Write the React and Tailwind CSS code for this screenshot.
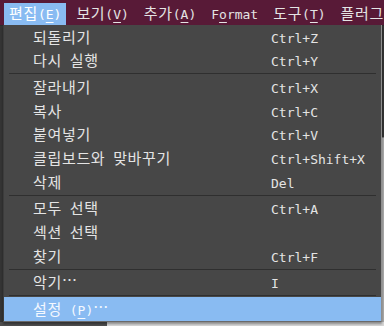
const WIDE = /[\u1100-\u11ff\u3130-\u318f\uac00-\ud7a3\u2026]/;

// Qt style label: "&" marks the mnemonic letter
function Label({ text }) {
  const runs = [];
  let under = false;
  for (const ch of text) {
    if (ch === '&') {
      under = true;
      continue;
    }
    const wide = WIDE.test(ch);
    const last = runs[runs.length - 1];
    if (!under && ch !== '…' && last && !last.u && !last.dots && last.wide === wide) last.s += ch;
    else runs.push({ s: ch, wide, u: under, dots: ch === '…' });
    under = false;
  }
  return (
    <span className="whitespace-pre">
      {runs.map((r, i) =>
        r.dots ? (
          <span
            key={i}
            className="inline-block -translate-y-[2px] font-['Noto_Sans_CJK_KR',sans-serif] text-[15px] tracking-[0.66px]"
          >
            {r.s}
          </span>
        ) : r.wide ? (
          <span key={i} className="font-['Noto_Sans_CJK_KR',sans-serif] text-[15px] tracking-[0.66px]">
            {r.s}
          </span>
        ) : (
          <span
            key={i}
            className={
              r.u
                ? "font-['DejaVu_Sans_Mono',monospace] text-[13px] underline underline-offset-[3px]"
                : "font-['DejaVu_Sans_Mono',monospace] text-[13px]"
            }
          >
            {r.s}
          </span>
        )
      )}
    </span>
  );
}

const menus = ['편집(&E)', '보기(&V)', '추가(&A)', 'F&ormat', '도구(&T)', '플러그인(&P)'];

const items = [
  ['되돌리기', 'Ctrl+Z'],
  ['다시 실행', 'Ctrl+Y'],
  null,
  ['잘라내기', 'Ctrl+X'],
  ['복사', 'Ctrl+C'],
  ['붙여넣기', 'Ctrl+V'],
  ['클립보드와 맞바꾸기', 'Ctrl+Shift+X'],
  ['삭제', 'Del'],
  null,
  ['모두 선택', 'Ctrl+A'],
  ['섹션 선택', ''],
  ['찾기', 'Ctrl+F'],
  null,
  ['악기…', 'I'],
  null,
  ['설정 (&P)…', '', true],
];

export default function App() {
  return (
    <div className="relative w-[384px] h-[326px] overflow-hidden bg-[#3a3a3a] text-[#e4e4e4]">
      <div className="h-[25px] bg-[#581a37] flex items-end pl-[4px] gap-[5px] leading-[22px]">
        {menus.map((m, i) => (
          <div
            key={m}
            className={
              i === 0
                ? 'h-[22px] px-[5px] bg-[#89bbf2] text-white shrink-0 flex items-center'
                : 'h-[22px] px-[5px] shrink-0 flex items-center'
            }
          >
            <Label text={m} />
          </div>
        ))}
      </div>
      <div className="h-px bg-[#2c2c2c]" />

      {/* app content behind the popup */}
      <div className="flex h-[300px]">
        <div className="w-[3px] bg-[#343434]" />
        <div className="flex-1" />
        <div className="w-[3px] flex flex-col">
          <div className="h-[111px] bg-[#333]" />
          <div className="flex-1 bg-[#a9a9a9] border-t border-[#777]" />
        </div>
      </div>
      <div className="absolute left-0 bottom-0 w-full h-[4px] flex">
        <div className="w-[107px] bg-[#4d4d4d]" />
        <div className="flex-1 bg-[#d6d6d6]" />
      </div>

      {/* edit menu popup */}
      <div className="absolute left-[3px] top-[25px] w-[379px] bg-[#474747] border-l border-[#3c3c3c] border-r border-r-[#8f8f8f] border-b border-b-[#6a6a6a] shadow-[0_2px_2px_rgba(0,0,0,0.35)]">
        {items.map((it, i) =>
          it === null ? (
            <div key={i} className="h-[3px] flex items-center px-[5px]">
              <div className="h-px w-full bg-[#2f2f2f]" />
            </div>
          ) : (
            <div
              key={i}
              className={
                it[2]
                  ? 'h-[23.67px] flex items-center bg-[#89bbf2] text-[#f4f8ff]'
                  : 'h-[23.67px] flex items-center'
              }
            >
              <div className="w-[267px] pl-[29px] shrink-0">
                <Label text={it[0]} />
              </div>
              <div>
                <Label text={it[1]} />
              </div>
            </div>
          )
        )}
      </div>
    </div>
  );
}
